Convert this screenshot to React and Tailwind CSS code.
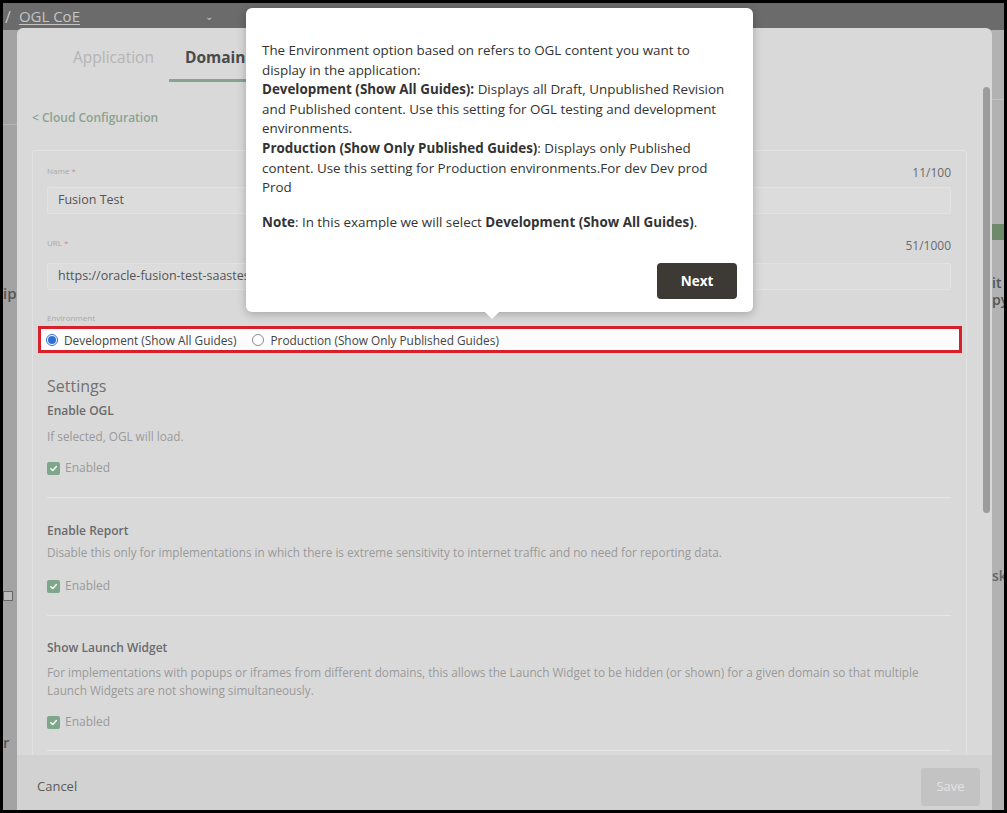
import React from 'react';

const formFont = { fontFamily: '"Open Sans", "Noto Sans", sans-serif' };

function CheckRow() {
  return (
    <div className="flex items-center gap-[5px] h-4">
      <span className="w-[13px] h-[13px] rounded-[2px] bg-[#7ea68a] flex items-center justify-center">
        <svg width="9" height="9" viewBox="0 0 10 10" fill="none">
          <path d="M2 5.2 4.2 7.3 8.2 2.8" stroke="#fff" strokeWidth="1.6" strokeLinecap="round" strokeLinejoin="round" />
        </svg>
      </span>
      <span className="text-[12px] leading-4 text-[#9a9a9a]">Enabled</span>
    </div>
  );
}

function Radio({ checked, label }) {
  return (
    <label className="flex items-center gap-[6px]">
      {checked ? (
        <span className="w-[12px] h-[12px] rounded-full border border-[#2f6fd6] bg-white flex items-center justify-center">
          <span className="w-[8px] h-[8px] rounded-full bg-[#2f6fd6]" />
        </span>
      ) : (
        <span className="w-[12px] h-[12px] rounded-full border border-[#8a8a8a] bg-white" />
      )}
      <span className="text-[11.85px] leading-4 text-[#444]">{label}</span>
    </label>
  );
}

function FieldLabel({ name, count, labelTop, countTop }) {
  return (
    <div className="flex items-start justify-between h-5">
      <span className="text-[8px] leading-[10px] text-[#a8a8a8]" style={{ marginTop: labelTop }}>
        {name} <span className="text-[#d48a8a]">*</span>
      </span>
      <span className="text-[12px] leading-4 text-[#6a6a6a]" style={{ marginTop: countTop }}>{count}</span>
    </div>
  );
}

function Tooltip() {
  return (
    <div className="absolute left-[243px] top-[5px] w-[507px] h-[304px] bg-white rounded-[6px] shadow-[0_2px_10px_rgba(0,0,0,0.25)] pt-[33px] px-4">
      <div className="text-[13.4px] leading-[19.6px] text-[#333] whitespace-nowrap">
        <p>
          The Environment option based on refers to OGL content you want to<br />
          display in the application:<br />
          <b>Development (Show All Guides):</b> Displays all Draft, Unpublished Revision<br />
          and Published content. Use this setting for OGL testing and development<br />
          environments.<br />
          <b>Production (Show Only Published Guides)</b>: Displays only Published<br />
          content. Use this setting for Production environments.For dev Dev prod<br />
          Prod
        </p>
        <p className="mt-[15px]">
          <b>Note</b>: In this example we will select <b>Development (Show All Guides)</b>.
        </p>
      </div>
      <button className="absolute right-4 bottom-[13px] w-[80px] h-[36px] rounded-[4px] bg-[#3d3935] text-white text-[13.5px] font-bold">
        Next
      </button>
      <span className="absolute left-[241px] -bottom-[5px] w-[10px] h-[10px] bg-white rotate-45" />
    </div>
  );
}

export default function App() {
  return (
    <div className="w-[1007px] h-[813px] border-[3px] border-black overflow-hidden relative bg-[#a3a3a3]" style={formFont}>
      {/* page behind the dialog */}
      <div className="h-[27px] bg-[#6b6b6b] flex items-center pl-[2px] gap-[8px] text-[#c4c4c4]">
        <span className="text-[16px]">/</span>
        <span className="text-[15px] underline decoration-1 underline-offset-2">OGL CoE</span>
        <span className="ml-[117px] text-[10px]">⌄</span>
      </div>
      <div className="flex justify-between h-[780px]">
        <div className="w-[14px] flex flex-col text-[#555] text-[15px] font-semibold">
          <div className="h-[95px] border-b border-[#b5b5b5]" />
          <div className="mt-[160px] leading-4">ip</div>
          <div className="mt-[290px] w-[10px] h-[10px] border border-[#666] bg-[#bbb]" />
          <div className="mt-[130px]">r</div>
        </div>
        <div className="w-[12px] bg-[#b2b2b2] flex flex-col text-[#555] text-[14px] font-semibold overflow-hidden">
          <div className="h-[70px] border-b border-[#c3c3c3]" />
          <div className="mt-[124px] h-[16px] bg-[#6f8a6a]" />
          <div className="mt-[34px] leading-[17px]">it</div>
          <div className="leading-[17px]">py</div>
          <div className="mt-[260px] leading-4 text-[#666]">sk</div>
        </div>
      </div>

      {/* dialog */}
      <div className="absolute left-[14px] top-[25px] w-[975px] bottom-0 bg-[#d9d9d9] rounded-t-[6px] flex flex-col overflow-hidden">
        <div className="flex-1 overflow-hidden flex flex-col">
          <div className="flex pl-[56px] pt-[19px] text-[15.5px] leading-5">
            <div className="pb-[12px] text-[#b4b4b4]">Application</div>
            <div className="ml-[15px] px-[16px] pb-[12px] border-b-[3px] border-[#87a391] text-[#4a4a4a] font-bold">Domains</div>
          </div>
          <div className="mt-[28px] ml-[15px] text-[12px] leading-4 font-semibold text-[#8aa390]">&lt; Cloud Configuration</div>

          <div className="mt-[24px] ml-[15px] mr-[25px] border border-[#e3e3e3] rounded-[3px] pl-[14px] pr-[15px] pt-[11px]">
            <FieldLabel name="Name" count="11/100" labelTop={4} countTop={3} />
            <div className="mt-[5px] h-[27px] border border-[#e2e2e2] bg-[#dcdcdc] rounded-[2px] pl-[10px] flex items-center text-[12.5px] text-[#555]">
              Fusion Test
            </div>
            <div className="mt-[19px]"><FieldLabel name="URL" count="51/1000" labelTop={5} countTop={5} /></div>
            <div className="mt-[10px] h-[27px] border border-[#e2e2e2] bg-[#dcdcdc] rounded-[2px] pl-[10px] flex items-center text-[12.5px] text-[#555]">
              https://oracle-fusion-test-saastest.oraclecloud.com
            </div>
            <div className="mt-[23px] text-[8px] leading-[10px] text-[#a8a8a8]">Environment</div>
            <div className="mt-[3px] -ml-[9px] -mr-[11px] h-[27px] border-[3px] border-[#d7202b] bg-[#fcfcfc] flex items-center pl-[5px] gap-[16px]">
              <Radio checked label="Development (Show All Guides)" />
              <Radio label="Production (Show Only Published Guides)" />
            </div>

            <div className="mt-[23px] text-[16px] leading-5 text-[#717171]">Settings</div>
            <div className="mt-[7px] text-[12px] leading-4 font-semibold text-[#6b6b6b]">Enable OGL</div>
            <div className="mt-[9px] text-[11.75px] leading-4 text-[#9a9a9a]">If selected, OGL will load.</div>
            <div className="mt-[16px]"><CheckRow /></div>
            <div className="mt-[21px] border-t border-[#e6e6e6]" />

            <div className="mt-[25px] text-[12px] leading-4 font-semibold text-[#6b6b6b]">Enable Report</div>
            <div className="mt-[5px] text-[11.75px] leading-4 text-[#9a9a9a]">
              Disable this only for implementations in which there is extreme sensitivity to internet traffic and no need for reporting data.
            </div>
            <div className="mt-[18px]"><CheckRow /></div>
            <div className="mt-[21px] border-t border-[#e6e6e6]" />

            <div className="mt-[24px] text-[12px] leading-4 font-semibold text-[#6b6b6b]">Show Launch Widget</div>
            <div className="mt-[7px] text-[11.75px] leading-[18px] text-[#9a9a9a] whitespace-nowrap">
              For implementations with popups or iframes from different domains, this allows the Launch Widget to be hidden (or shown) for a given domain so that multiple<br />
              Launch Widgets are not showing simultaneously.
            </div>
            <div className="mt-[15px]"><CheckRow /></div>
            <div className="mt-[20px] border-t border-[#e6e6e6]" />
            <div className="h-[60px]" />
          </div>
        </div>

        <div className="h-[55px] shrink-0 bg-[#d2d2d2] flex justify-between pl-[20px] pr-[12px]">
          <span className="mt-[23px] text-[13px] leading-4 text-[#5a5a5a]">Cancel</span>
          <button className="mt-[13px] w-[59px] h-[38px] rounded-[3px] bg-[#c3c3c3] text-[#e4e4e4] text-[13px]">Save</button>
        </div>

        <div className="absolute right-[2px] top-[59px] w-[7px] h-[426px] rounded-full bg-[#9c9c9c]" />
      </div>

      <Tooltip />
    </div>
  );
}
